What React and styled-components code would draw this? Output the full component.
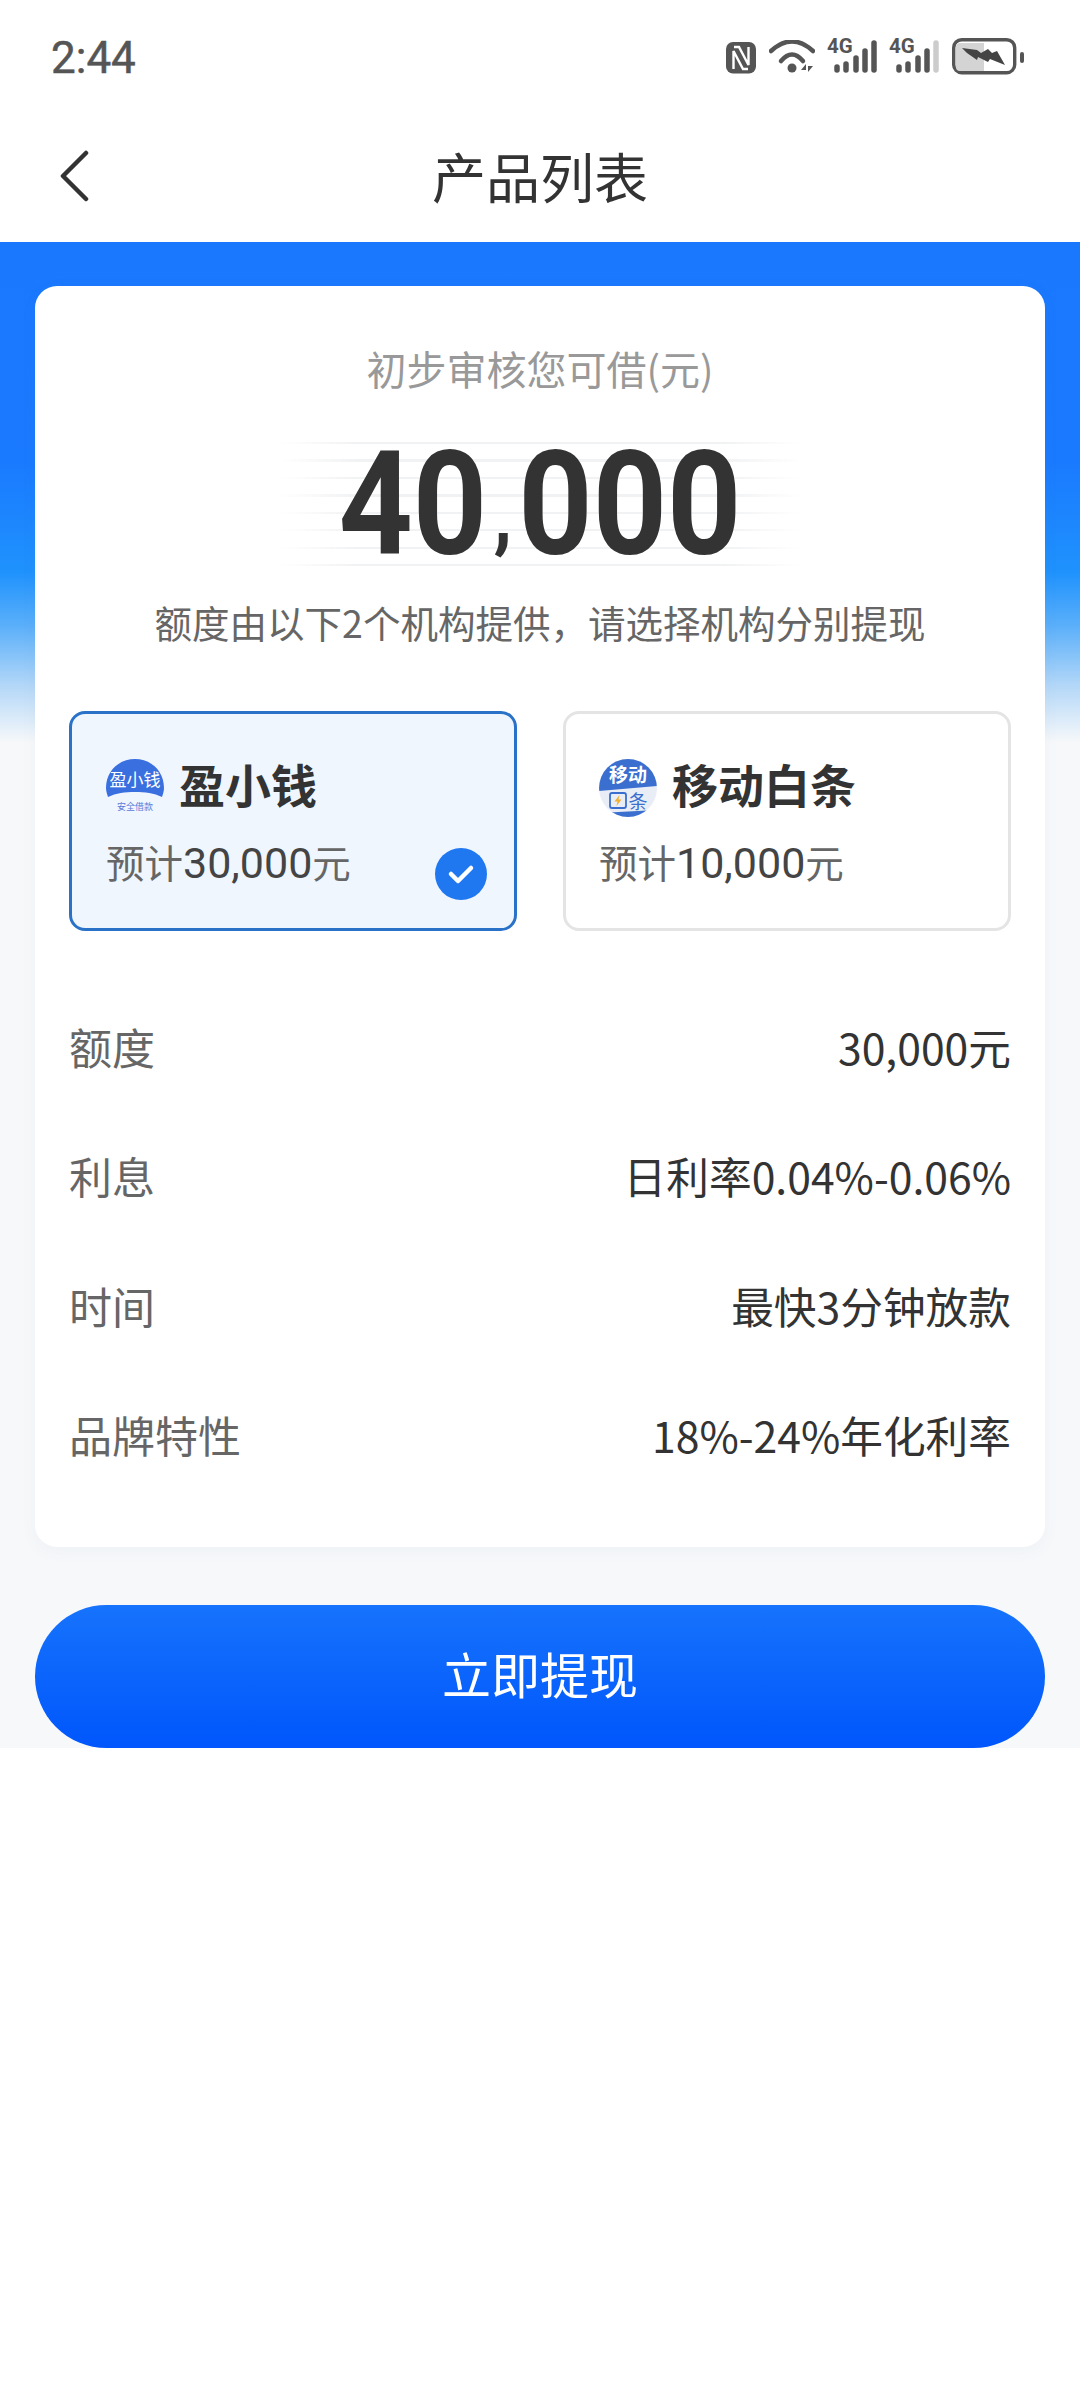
import React from 'react';
import styled, { createGlobalStyle } from 'styled-components';

const Global = createGlobalStyle`
  html, body { margin: 0; padding: 0; background: #fff; }
  body { font-family: "Noto Sans CJK SC", "Noto Sans", sans-serif; }
  * { box-sizing: border-box; }
`;
const Page = styled.div`width: 1080px; min-height: 2400px; background: #fff;`;
const StatusBar = styled.div`
  height: 100px; display: flex; align-items: flex-start; justify-content: space-between;
  padding: 38px 56px 0 51px;
`;
const Clock = styled.div`font: 400 44px/40px Roboto, sans-serif; color: #555; -webkit-text-stroke: .5px #555;`;
const StatusIcons = styled.div`display: flex; align-items: flex-start; height: 40px;`;
const NavBar = styled.div`
  height: 142px; padding-top: 10px; display: grid; grid-template-columns: 150px 1fr 150px; align-items: center;
`;
const BackButton = styled.div`padding-left: 60px; display: flex;`;
const Title = styled.div`
  text-align: center; font-size: 54px; line-height: 70px; color: #333; font-weight: 400;
`;
const Main = styled.div`
  height: 1506px; padding: 44px 35px 0;
  background: linear-gradient(#1a78ff 0, #1a7aff 220px, #1f92fd 330px, #5cb0fa 385px, #b5d8f8 445px, #f6f8fa 500px, #f6f8fa 100%);
`;
const Card = styled.div`
  height: 1261px; background: #fff; border-radius: 22px; padding: 0 34px;
  box-shadow: 0 4px 16px rgba(90,110,140,.05);
`;
const Eyebrow = styled.div`
  padding-top: 53px; text-align: center; font-size: 40px; line-height: 58px; color: #999;
`;
const AmountBox = styled.div`
  margin: 45px auto 0; width: 523px; height: 126px; padding-top: 20px; position: relative;
  display: flex; justify-content: center; align-items: center;
  &::before {
    content: ''; position: absolute; inset: 0;
    background: repeating-linear-gradient(#f1f2f3 0 2px, transparent 2px 17.5px);
    -webkit-mask-image: linear-gradient(90deg, transparent, #000 15%, #000 85%, transparent);
    mask-image: linear-gradient(90deg, transparent, #000 15%, #000 85%, transparent);
  }
`;
const Amount = styled.div`
  position: relative;
  font: 700 144px/106px Roboto, sans-serif; color: #333;
  transform: scaleX(.9);
  white-space: nowrap;
`;
const Comma = styled.span`
  font-size: 84px; position: relative; top: -11px; margin: 0 7px;
`;
const Note = styled.div`
  margin-top: 26px; text-align: center; font-size: 37.5px; line-height: 56px; color: #666;
`;
const Options = styled.div`margin-top: 61px; display: flex; justify-content: space-between;`;
const Option = styled.div`
  width: 448px; height: 220px; border-radius: 16px; position: relative;
  border: 3px solid ${p => p.$active ? '#2a72c8' : '#e4e4e4'};
  background: ${p => p.$active ? '#eff6fe' : '#fff'};
  padding: 44px 0 0 ${p => p.$inset}px;
`;
const OptionHead = styled.div`display: flex; align-items: center; gap: 15px; height: 60px;`;
const OptionName = styled.div`font-size: 46px; line-height: 60px; font-weight: 700; color: #333; margin-bottom: 11px;`;
const OptionSub = styled.div`margin-top: 15px; font-size: 38.5px; line-height: 56px; color: #666;`;
const Digits = styled.span`font: 400 43px/56px Roboto, sans-serif; color: #444;`;
const CheckBadge = styled.div`
  position: absolute; right: 27px; bottom: 28px; width: 52px; height: 52px; border-radius: 50%;
  background: #1f78f0; display: flex; align-items: center; justify-content: center;
`;
const Rows = styled.div`margin-top: 50px;`;
const Row = styled.div`
  height: 129.5px; display: flex; align-items: center; justify-content: space-between;
`;
const Label = styled.div`color: #666; font-size: 43px;`;
const Value = styled.div`color: #333; font-size: 42.7px;`;
const CTA = styled.div`
  margin-top: 58px; height: 143px; padding-bottom: 9px; border-radius: 72px; color: #fff; font-size: 49px;
  background: linear-gradient(#1673fc, #0056fc);
  display: flex; align-items: center; justify-content: center;
`;

const Nfc = () => (
  <svg width="30" height="32" viewBox="0 0 30 32" style={{ marginRight: 13, marginTop: 4 }}>
    <rect width="30" height="31.500" rx="7" fill="#555" />
    <path d="M8 5h5l9.500 18V5M22 27h-5L7.500 9v18" fill="none" stroke="#fff" strokeWidth="2.400" />
  </svg>
);
const Wifi = () => (
  <svg width="46" height="36" viewBox="0 0 46 36" style={{ marginRight: 12, marginTop: 2 }}>
    <g fill="none" stroke="#555" strokeWidth="4.500" strokeLinecap="round">
      <path d="M2 11Q23-8 44 11" />
      <path d="M12 21Q23 8 34 21" />
    </g>
    <circle cx="23" cy="28" r="4.500" fill="#555" />
    <path d="M37 32v-8l-5 6h5zM39 24v8l5-6h-5z" fill="#555" />
  </svg>
);
const Cell = ({ dim, gap }) => (
  <svg width="50" height="44" viewBox="0 -6 50 44" style={{ marginRight: gap, marginTop: -6 }}>
    <text x="0" y="15" fontFamily="Roboto, sans-serif" fontWeight="700" fontSize="20.500" fill="#555">4G</text>
    <g fill="none" stroke="#555" strokeWidth="5.500" strokeLinecap="round">
      <path d="M10 29v3M19 26v6M29 20v12M38 13v19" />
      <path d="M47 5v27" stroke={dim ? '#ccc' : '#555'} />
    </g>
  </svg>
);
const Battery = () => (
  <svg width="72" height="38" viewBox="0 0 72 38">
    <rect x="1.700" y="1.700" width="61" height="33" rx="8" fill="#fff" stroke="#555" strokeWidth="3.400" />
    <path d="M4 9q0-4 4-4h24v28H8q-4 0-4-4z" fill="#d4d4d4" />
    <path d="M10 10L25 12 29 15 36 11 40 15 45 13 53 27 38 21 36 24 26 19 25 22 15 15z" fill="#444" />
    <rect x="68" y="14" width="4" height="11" rx="2" fill="#555" />
  </svg>
);
const Back = () => (
  <svg width="30" height="52" viewBox="0 0 30 52">
    <path d="M26 3L3 26l23 23" fill="none" stroke="#333" strokeWidth="4.500" strokeLinecap="round" strokeLinejoin="round" />
  </svg>
);
const Check = () => (
  <svg width="30" height="24" viewBox="0 0 30 24">
    <path d="M5 12l7 7L25 6" fill="none" stroke="#fff" strokeWidth="4.500" strokeLinecap="round" strokeLinejoin="round" />
  </svg>
);
const LogoA = () => (
  <svg width="58" height="58" viewBox="0 0 58 58">
    <path d="M0 29C0 12 13 0 29 0s29 12 29 29c0 3-1 6-2 9-8-4-17-5-27-5S10 34 2 38c-1-3-2-6-2-9z" fill="#3a6fe0" />
    <text x="29" y="27" textAnchor="middle" fontSize="17" fill="#fff">盈小钱</text>
    <text x="29" y="51" textAnchor="middle" fontSize="9" fill="#5b7bd8">安全借款</text>
  </svg>
);
const LogoB = () => (
  <svg width="58" height="58" viewBox="0 0 58 58">
    <defs><clipPath id="logoClip"><circle cx="29" cy="29" r="29" /></clipPath></defs>
    <g clipPath="url(#logoClip)">
      <rect width="58" height="58" fill="#e9edf5" />
      <path d="M0 0h58v27L0 32z" fill="#3a6fd0" />
      <path d="M0 58v-4l58-3v7z" fill="#3a6fd0" />
      <text x="29" y="23" textAnchor="middle" fontSize="19" fontWeight="700" fill="#fff">移动</text>
      <rect x="11" y="34" width="16" height="15" rx="2" fill="none" stroke="#3a6fd0" strokeWidth="1.800" />
      <path d="M20.500 36l-5 6.500h3l-1 4.500 5-6.500h-3z" fill="#f2b02e" />
      <text x="39" y="50" textAnchor="middle" fontSize="19" fill="#3a6fd0">条</text>
    </g>
  </svg>
);

const rows = [
  ['额度', '30,000元'],
  ['利息', '日利率0.04%-0.06%'],
  ['时间', '最快3分钟放款'],
  ['品牌特性', '18%-24%年化利率'],
];

export default function App() {
  return (
    <Page>
      <Global />
      <StatusBar>
        <Clock>2:44</Clock>
        <StatusIcons><Nfc /><Wifi /><Cell gap={12} /><Cell dim gap={13} /><Battery /></StatusIcons>
      </StatusBar>
      <NavBar>
        <BackButton><Back /></BackButton>
        <Title>产品列表</Title>
      </NavBar>
      <Main>
        <Card>
          <Eyebrow>初步审核您可借(元)</Eyebrow>
          <AmountBox><Amount>40<Comma>,</Comma>000</Amount></AmountBox>
          <Note>额度由以下2个机构提供，请选择机构分别提现</Note>
          <Options>
            <Option $active $inset={34}>
              <OptionHead><LogoA /><OptionName>盈小钱</OptionName></OptionHead>
              <OptionSub>预计<Digits>30,000</Digits>元</OptionSub>
              <CheckBadge><Check /></CheckBadge>
            </Option>
            <Option $inset={33}>
              <OptionHead><LogoB /><OptionName>移动白条</OptionName></OptionHead>
              <OptionSub>预计<Digits>10,000</Digits>元</OptionSub>
            </Option>
          </Options>
          <Rows>
            {rows.map(([l, v]) => (
              <Row key={l}><Label>{l}</Label><Value>{v}</Value></Row>
            ))}
          </Rows>
        </Card>
        <CTA>立即提现</CTA>
      </Main>
    </Page>
  );
}
